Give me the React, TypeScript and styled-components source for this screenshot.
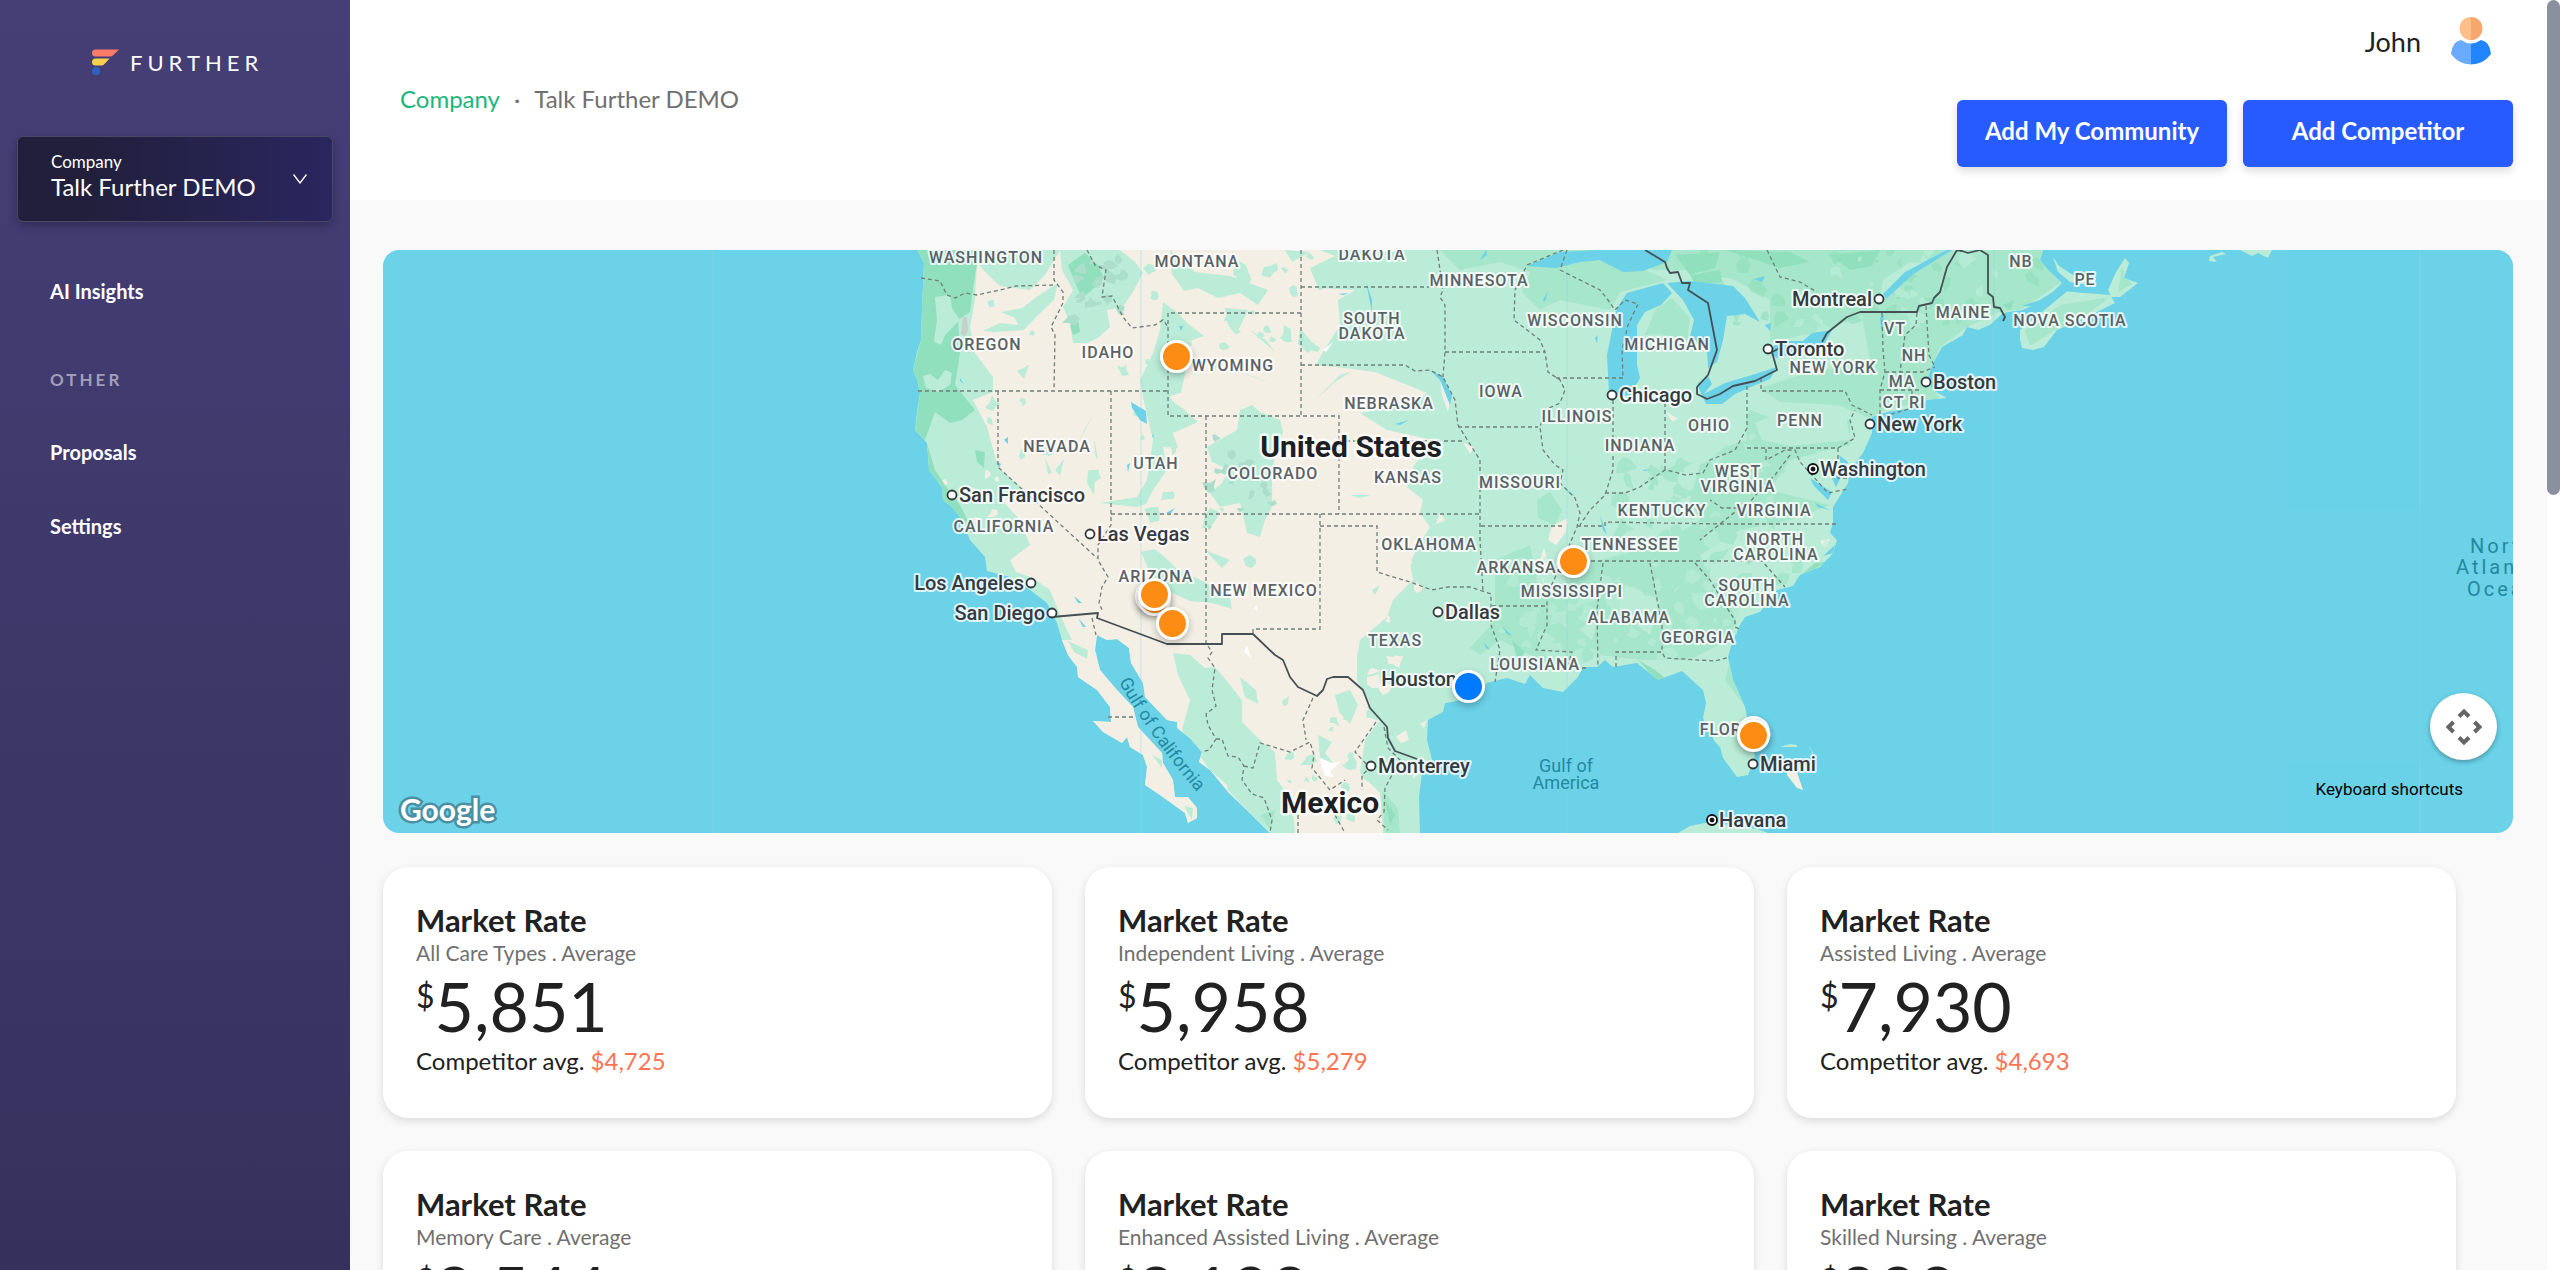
import React from "react";
import styled, { createGlobalStyle } from "styled-components";

const GlobalStyle = createGlobalStyle`
  * { box-sizing: border-box; }
  body { margin: 0; font-family: Lato, "Liberation Sans", sans-serif; color: #212121; background: #ffffff; }
  button { font-family: inherit; border: 0; padding: 0; cursor: pointer; }
  a { color: inherit; text-decoration: none; }
  h2, p { margin: 0; }
`;

/* ---------- shell ---------- */

const Shell = styled.div`
  display: flex;
  height: 100vh;
  overflow: hidden;
`;

const Sidebar = styled.aside`
  flex: 0 0 350px;
  display: flex;
  flex-direction: column;
  color: #ffffff;
  background: linear-gradient(180deg, #453f76 0%, #36315c 100%);
`;

const Brand = styled.a`
  display: flex;
  align-items: center;
  gap: 11px;
  height: 136px;
  padding: 0 0 11px 92px;
`;

const Wordmark = styled.span`
  font-size: 22px;
  line-height: 28px;
  letter-spacing: 5px;
`;

const CompanySwitch = styled.button`
  display: flex;
  align-items: center;
  justify-content: space-between;
  height: 86px;
  margin: 0 17px;
  padding: 0 25px 0 33px;
  text-align: left;
  color: #ffffff;
  border: 1px solid #4a4763;
  border-radius: 6px;
  background: linear-gradient(90deg, #211f3b 20%, #2a265f 100%);
  box-shadow: 0 4px 8px rgba(20, 16, 50, 0.35);
`;

const SwitchText = styled.span`
  display: flex;
  flex-direction: column;
  padding-bottom: 6px;
  font-size: 24px;
  line-height: 29px;
`;

const SwitchLabel = styled.span`
  font-size: 17px;
  line-height: 21px;
`;

const Nav = styled.nav`
  display: flex;
  flex-direction: column;
  padding: 32px 50px 0;
`;

const NavLink = styled.a`
  padding: 25px 0;
  font-size: 20px;
  line-height: 24px;
  font-weight: 700;
`;

const NavHeading = styled.span`
  margin: 40px 0 23px;
  font-size: 17px;
  line-height: 24px;
  font-weight: 700;
  letter-spacing: 3px;
  color: #a19eb9;
`;

const Page = styled.div`
  flex: 1 1 0;
  min-width: 0;
  overflow: hidden;
  background: #f9f9f9;
`;

const ScrollTrack = styled.div`
  flex: 0 0 13px;
  background: #ffffff;
`;

const ScrollThumb = styled.div`
  height: 39%;
  border-radius: 7px;
  background: #8a909d;
`;

/* ---------- header ---------- */

const Header = styled.header`
  display: flex;
  justify-content: space-between;
  align-items: center;
  min-height: 200px;
  padding: 17px 34px 33px 50px;
  background: #ffffff;
`;

const Crumbs = styled.nav`
  display: flex;
  gap: 14px;
  padding-top: 12px;
  font-size: 24px;
  line-height: 29px;
  color: #707070;
`;

const CrumbLink = styled.a`
  color: #1cb67c;
`;

const HeaderSide = styled.div`
  display: flex;
  flex-direction: column;
  align-items: flex-end;
  gap: 35px;
`;

const User = styled.button`
  display: flex;
  align-items: center;
  gap: 30px;
  height: 48px;
  padding-right: 22px;
  font-size: 27px;
  color: #212121;
  background: none;
`;

const Actions = styled.div`
  display: flex;
  gap: 16px;
`;

const ActionButton = styled.button`
  width: 270px;
  height: 67px;
  padding-bottom: 6px;
  font-size: 24px;
  font-weight: 700;
  color: #ffffff;
  border-radius: 6px;
  background: #275bff;
  box-shadow: 0 4px 8px rgba(0, 0, 0, 0.14);
`;

const Content = styled.main`
  padding: 50px 34px 33px 33px;
`;

/* ---------- map ---------- */

const MapFrame = styled.section`
  position: relative;
  height: 583px;
  overflow: hidden;
  border-radius: 16px;
  background: #6bd2e8;
`;

const MapCanvas = styled.div`
  position: absolute;
  top: 0;
  left: 50%;
  width: 2130px;
  height: 583px;
  margin-left: -1065px;
  svg { display: block; }
`;

const Pin = styled.button<{ $x: number; $y: number; $tone: string }>`
  position: absolute;
  left: ${(p) => p.$x - 17}px;
  top: ${(p) => p.$y - 17}px;
  width: 33px;
  height: 33px;
  border: 3px solid #ffffff;
  border-radius: 50%;
  background: ${(p) => p.$tone};
  box-shadow: 0 3px 7px rgba(0, 0, 0, 0.25);
`;

const MapLogo = styled.a`
  position: absolute;
  left: 17px;
  bottom: 6px;
  font-size: 30px;
  line-height: 36px;
  font-weight: 700;
  color: #ffffff;
  paint-order: stroke fill;
  -webkit-text-stroke: 5px #4a8fa2;
`;

const CameraButton = styled.button`
  position: absolute;
  right: 16px;
  bottom: 73px;
  display: grid;
  place-items: center;
  width: 67px;
  height: 67px;
  border-radius: 50%;
  background: #ffffff;
  box-shadow: 0 2px 5px rgba(0, 0, 0, 0.3);
`;

const Shortcuts = styled.button`
  position: absolute;
  right: 50px;
  bottom: 34px;
  font-family: Roboto, "Liberation Sans", sans-serif;
  font-size: 17px;
  line-height: 20px;
  color: #000000;
  background: none;
`;

const C = {
  water: "#6bd2e8",
  pale: "#bbecd8",
  mid: "#a6e6cb",
  deep: "#90e0bd",
  dry: "#f4efe5",
};

const MAINLAND =
  "M917,250 924,263 922,307 921,340 917,352 913,370 917,380 920,393 917,412 915,430 927,443 929,470 942,487 943,500 952,507 960,517 970,540 985,557 987,571 1010,577 1030,590 1047,603 1057,623 1062,640 1068,655 1077,667 1078,677 1097,690 1110,707 1111,722 1093,721 1103,732 1122,743 1127,737 1130,747 1143,755 1147,767 1145,785 1160,795 1185,813 1188,823 1197,818 1197,808 1188,797 1175,797 1173,780 1163,763 1162,753 1150,740 1138,727 1133,707 1117,690 1100,670 1095,650 1097,635 1107,640 1117,639 1129,648 1131,663 1143,683 1145,697 1167,720 1177,722 1177,728 1190,738 1202,752 1199,762 1210,770 1227,785 1228,792 1257,820 1270,833 1420,833 1419,797 1422,773 1432,760 1427,740 1428,720 1443,712 1445,703 1453,702 1470,697 1487,683 1507,678 1525,684 1530,675 1543,688 1563,692 1578,677 1583,667 1597,667 1605,660 1613,667 1637,663 1658,680 1682,671 1703,690 1706,703 1703,718 1715,742 1720,747 1723,758 1737,777 1748,775 1755,757 1745,707 1733,680 1728,657 1732,643 1740,625 1745,617 1760,612 1777,590 1793,586 1800,575 1820,567 1833,553 1837,540 1830,533 1833,523 1833,507 1848,483 1850,470 1863,453 1872,433 1872,417 1887,412 1912,408 1927,400 1947,398 1933,390 1927,380 1933,363 1942,347 1963,335 1967,327 1978,330 1990,325 2003,313 2022,310 2040,303 2057,288 2062,283 2048,270 2040,260 2043,250Z";

const ISLANDS = [
  "M2020,340 2020,330 2048,307 2042,300 2057,290 2073,292 2110,295 2115,303 2087,317 2057,330 2044,347 2033,350 2022,348Z",
  "M2108,290 2116,272 2125,258 2129,263 2124,278 2138,283 2120,297 2111,297Z",
  "M2053,257 2059,266 2073,275 2096,278 2094,286 2070,282 2058,272Z",
  "M1678,833 1690,826 1710,822 1735,826 1757,829 1768,833Z",
  "M1780,747 1790,744 1797,745 1797,747Z",
  "M1806,744 1812,750 1811,760 1813,752Z",
  "M2210,256 2209,261 2217,262 2213,257 2226,254 2222,252Z",
  "M2240,250 2252,256 2258,253 2268,258 2272,250Z",
];

const DRY = [
  "M977,262 985,272 1000,286 1030,290 1045,275 1060,250 1320,250 1335,256 1310,268 1318,288 1355,290 1338,300 1340,325 1323,352 1316,365 1345,368 1375,372 1400,382 1427,393 1413,403 1360,413 1387,430 1433,440 1413,467 1407,487 1423,500 1420,513 1430,527 1420,543 1410,563 1413,580 1393,600 1387,617 1360,640 1357,657 1357,680 1370,703 1380,720 1365,740 1360,773 1380,793 1383,833 1270,833 1257,820 1228,792 1210,770 1199,762 1202,752 1190,738 1177,728 1177,722 1167,720 1145,697 1143,683 1131,663 1129,648 1117,639 1107,640 1097,635 1095,650 1100,670 1117,690 1133,707 1138,727 1150,740 1162,753 1163,763 1173,780 1175,797 1188,797 1197,808 1197,818 1188,823 1185,813 1160,795 1145,785 1147,767 1143,755 1130,747 1127,737 1122,743 1103,732 1093,721 1111,722 1110,707 1097,690 1078,677 1077,667 1068,655 1062,640 1072,640 1060,615 1050,590 1033,578 1016,572 1010,560 1030,545 1020,520 1002,500 1024,490 998,467 987,427 973,400 993,392 993,377 975,353 970,327 975,300Z",
  "M1430,527 1445,520 1440,512 1436,524Z",
  "M1440,380 1450,400 1448,412 1442,395Z",
  "M1463,442 1474,448 1470,454Z",
  "M1548,540 1552,526 1568,518 1566,532 1556,545Z",
  "M1540,560 1544,548 1550,570 1543,582Z",
  "M1396,737 1406,730 1409,740 1401,743Z",
  "M1420,724 1427,720 1424,728Z",
  "M1788,761 1797,772 1803,790 1797,788 1787,775Z",
  "M1820,541 1830,539 1825,549Z",
  "M1424,770 1412,779 1421,758Z",
  "M1665,411 1678,419 1672,421Z",
];

const PALE = [
  "M1060,250 1120,250 1135,262 1143,273 1134,290 1123,307 1107,310 1110,327 1098,338 1087,343 1073,343 1070,323 1063,307 1073,290 1062,270Z",
  "M1163,302 1178,313 1187,323 1204,336 1184,343 1188,360 1181,393 1167,397 1182,408 1198,422 1173,433 1178,448 1163,447 1167,470 1153,490 1146,504 1137,507 1100,503 1137,497 1147,480 1153,440 1143,397 1140,380 1153,353 1160,330Z",
  "M1207,447 1237,430 1240,410 1252,405 1260,412 1280,420 1283,432 1276,450 1272,473 1272,507 1265,520 1260,537 1247,533 1240,503 1220,507 1210,493 1222,483 1230,470 1212,462Z",
  "M1141,552 1155,549 1166,558 1178,570 1205,582 1230,598 1232,609 1212,603 1190,601 1166,590 1150,572Z",
  "M1173,653 1190,655 1205,668 1215,667 1226,680 1242,700 1242,722 1262,742 1275,752 1277,780 1292,800 1295,833 1268,833 1250,814 1228,790 1208,768 1196,750 1182,730 1190,700 1178,675Z",
  "M983,331 1000,323 1018,325 1015,318 1001,312 1022,308 1038,296 1058,283 1054,300 1036,317 1024,330 994,332Z",
  "M985,265 1003,274 1024,272 1005,282 990,276Z",
  "M1017,371 1029,365 1024,379Z",
  "M1170,250 1195,272 1230,276 1268,290 1258,305 1240,293 1218,298 1198,288 1184,291 1172,274Z",
  "M1225,308 1248,310 1236,335 1228,325Z",
  "M1250,330 1275,352 1266,340Z",
  "M1233,370 1262,380 1274,384 1252,376Z",
  "M1300,328 1315,346 1308,353 1298,344Z",
  "M1315,400 1340,375 1352,371 1335,382Z",
  "M1285,250 1310,252 1292,262Z",
  "M1335,695 1350,690 1358,705 1350,724 1339,712Z",
  "M1380,585 1375,595 1372,590Z",
  "M1205,550 1230,560 1222,568Z",
  "M1068,641 1088,650 1087,659 1074,652Z",
  "M1152,755 1162,760 1162,768Z",
  "M1184,806 1193,808 1192,820Z",
  "M1318,735 1332,742 1325,753 1335,765 1320,758Z",
  "M1350,495 1371,495 1360,498Z",
  "M1080,440 1092,417 1084,430Z",
  "M1045,458 1052,473 1048,474Z",
  "M1055,470 1064,459 1060,476Z",
  "M1088,470 1095,478 1094,495 1087,483Z",
  "M1094,437 1098,460 1095,455Z",
  "M1240,677 1256,690 1258,704 1245,697Z",
];

const MID = [
  "M1440,250 1530,250 1600,250 1650,272 1667,280 1620,292 1610,310 1560,300 1540,310 1522,292 1530,272 1500,262 1460,270Z",
  "M1650,270 1670,250 2043,250 2060,283 2022,309 2000,312 1967,327 1940,347 1927,380 1940,398 1885,410 1870,418 1838,405 1780,402 1760,388 1800,375 1870,360 1862,316 1828,330 1770,342 1770,300 1735,280 1690,270Z",
  "M1655,310 1672,298 1690,318 1687,340 1660,334 1645,335Z",
  "M1700,465 1735,440 1750,410 1790,425 1850,420 1850,445 1790,460 1770,490 1830,505 1790,520 1740,530 1700,555 1720,600 1740,610 1728,640 1690,660 1640,660 1600,655 1570,670 1540,660 1520,650 1500,640 1480,655 1470,648 1495,620 1495,560 1530,545 1540,595 1560,560 1600,560 1660,545 1700,520 1690,500Z",
  "M1537,500 1550,492 1562,510 1555,525 1538,518Z",
  "M2025,330 2060,305 2110,297 2085,316 2055,330 2030,346Z",
  "M2118,292 2122,266 2126,277 2132,284Z",
  "M1730,660 1745,705 1740,700 1725,680Z",
  "M1260,815 1275,810 1270,830Z",
  "M1382,790 1398,808 1400,833 1385,833Z",
];

const DEEP = [
  "M917,250 980,250 975,275 970,312 958,320 960,353 955,385 975,410 962,420 950,423 935,412 925,440 915,430 920,393 913,370 921,340 922,307 924,263Z",
  "M1068,265 1085,253 1098,265 1104,278 1090,292 1082,297 1076,285Z",
  "M1070,325 1078,320 1080,332 1073,335Z",
  "M975,450 985,452 984,468 977,462Z",
  "M927,443 935,470 945,485 960,505 975,535 965,530 943,500 929,470Z",
  "M1675,255 1720,252 1715,268 1690,275Z",
  "M1725,250 1790,252 1810,262 1780,268 1750,258Z",
  "M1830,255 1880,250 1872,266 1850,270Z",
  "M1690,275 1720,270 1722,282 1696,286Z",
  "M1638,660 1655,670 1665,678 1682,671 1660,684Z",
  "M1795,580 1815,563 1826,562 1810,572Z",
  "M1512,640 1525,652 1518,662Z",
  "M2002,305 2015,300 2010,310Z",
  "M1385,800 1395,815 1390,825Z",
];

const OPEN = [
  "M935,297 950,295 952,308 960,320 945,335 941,345 934,342 937,320Z",
  "M923,376 930,374 938,380 945,370 952,373 950,385 938,392 926,388Z",
  "M1700,420 1745,395 1747,440 1700,455Z",
  "M1755,423 1800,405 1845,410 1850,440 1790,446 1762,440Z",
  "M1883,280 1910,262 1925,263 1895,290 1880,300Z",
  "M1725,330 1770,300 1768,345 1735,375 1722,372Z",
  "M1540,575 1560,562 1570,580 1552,590Z",
  "M1580,630 1600,612 1592,640Z",
  "M1625,585 1660,600 1650,635 1618,612Z",
  "M1740,570 1775,560 1790,583 1765,592Z",
];

const LAKES = [
  "M1617,308 1627,293 1663,283 1672,293 1661,305 1645,312 1637,325 1637,365 1640,378 1630,396 1609,393 1607,355 1613,325Z",
  "M1667,283 1690,281 1733,286 1745,298 1760,322 1745,314 1727,316 1723,340 1717,362 1708,368 1707,350 1690,337 1694,320 1683,300Z",
  "M1527,266 1560,252 1600,250 1672,250 1667,262 1643,271 1623,272 1600,260 1580,262 1556,268Z",
  "M1697,384 1708,376 1712,384 1704,394 1725,383 1752,375 1777,367 1770,379 1753,386 1735,394 1722,404 1706,404Z",
  "M1767,352 1780,341 1803,341 1812,333 1832,330 1823,346 1800,352 1777,358Z",
  "M1883,294 1905,272 1947,250 1952,250 1912,275 1886,299Z",
  "M1131,402 1146,411 1147,424 1140,420 1132,408Z",
  "M1004,440 1008,437 1008,444Z",
  "M996,461 1001,464 999,468Z",
  "M1179,326 1183,326 1181,331Z",
  "M1366,282 1372,300 1372,312Z",
  "M1338,294 1348,293 1344,295Z",
  "M1395,424 1409,420 1400,425Z",
  "M1430,370 1443,377 1452,395 1450,405 1440,380Z",
  "M1480,260 1486,250 1487,255Z",
  "M1543,300 1548,291 1545,302Z",
  "M1595,338 1598,335 1597,343Z",
  "M1484,642 1490,650 1486,648Z",
  "M1502,626 1512,636 1507,634Z",
  "M1561,485 1575,496 1570,494Z",
  "M1642,470 1651,469 1645,471Z",
  "M1600,515 1607,535 1603,530Z",
  "M1754,279 1765,276 1762,282Z",
  "M1765,325 1771,323 1770,331Z",
  "M1880,318 1884,315 1882,335Z",
  "M1074,596 1082,603 1078,603Z",
  "M1078,618 1086,627 1083,627Z",
  "M1166,513 1175,508 1171,513Z",
  "M1127,465 1130,463 1128,472Z",
  "M1152,436 1153,434 1154,438Z",
  "M960,378 964,384 960,381Z",
  "M1839,455 1848,462 1836,487 1832,478 1842,470Z",
  "M1810,478 1832,492 1828,500 1814,486Z",
  "M1815,503 1830,510 1818,507Z",
  "M2022,306 2040,300 2056,290 2070,289 2048,307Z",
  "M1823,556 1835,545 1833,553Z",
];

const STATE_LINES =
  "M921,278L940,281 947,295 955,298 965,293 977,295 1000,290 1016,286 1053,285 M1054,250V280L1063,292V303L1051,327 1055,335 1054,391 M918,391H1168 M1087,250L1095,265 1106,270 1102,297 1112,296 1123,317 1132,328 1155,325 1163,320 1168,327 M1301,313H1168V416H1339V514 M1301,250V416 M998,391V467L1075,538 1097,558 M1111,391V525L1098,545V560L1108,577 1102,587 1099,603 1103,612 M1111,514H1479 M1206,416V644 M1301,365H1405L1415,371 1430,370 1443,377 1455,400 1458,425 1468,441 1480,460V540L1483,592 M1301,287H1440 M1437,250L1443,290 1440,297 1445,305V352L1443,377 M1445,352H1545 M1563,250L1527,265 1515,290 1514,320 1540,340 1545,352 1548,372 1560,380 1565,390 1560,403 1545,410 1540,427 1543,450 1555,465 1563,470 1560,483 1575,498 1580,513 1577,527 1563,560 1547,595V625L1536,650 1572,652 1568,665 M1458,427H1538 M1339,441H1465 M1556,378H1623 M1613,400V470L1605,495 1590,510 1580,525 M1665,403V470 M1605,493H1625L1640,487 1650,480 1665,470 1675,472 1685,475 1703,473 1710,460 1735,450 1747,428V383 M1481,526H1563 M1577,526H1605V522L1720,524H1836 M1591,561H1762L1785,587 M1320,526H1377V572L1410,582 1432,590 1448,587 1470,587 1491,594V625L1500,650 1495,682 M1320,514V629H1253V634 M1492,606H1545 M1603,563L1597,610 1598,667 M1650,563L1662,625V652 M1586,668H1570 M1616,667V652H1662L1665,658 1715,661 1730,657 M1560,270L1600,290 1608,300 1615,310 1625,300 1638,304 1628,325 1622,350 1623,378 M1567,250L1560,270 M1761,378V391H1845L1852,405 1872,415 M1747,448H1838L1855,438 1850,420 1855,410 M1838,448V478H1850 M1882,313L1883,350 1885,372 1880,390V415 M1885,372H1922L1935,367 M1917,313L1916,325 1905,335 1900,372 M1926,306L1929,355 1935,367 M1880,390H1920 M1912,391V408L1885,416 M1766,449V460L1785,450 1795,450 1800,462 1812,475 1828,493 1848,489 M1790,455L1775,475 1760,490 1745,508 1722,508 1710,500 M1695,563L1710,580 1725,605 1735,620 1735,627 1740,629 M1740,508L1700,540 M1767,250L1780,277 1800,282 1817,292 M1208,646L1212,652 1208,658 1215,668 1212,690 1216,706 1206,714 1208,725 1216,739 1209,750 1202,752 M1216,739H1222L1228,756 1238,757 1244,766 1242,780 1252,794 1264,798 1272,820 1270,833 M1244,766L1253,768 1260,743 1290,752 1310,742 1314,755 1312,768 1330,790 1345,780 M1313,698L1303,720 1306,740 M1376,722L1355,752 1370,768 1362,775 1362,790 M1384,727L1388,748 1400,760 1385,788 1384,812 1377,820 1388,830 M1108,717H1135 M1092,618L1096,635 M1335,815L1345,833 M1298,833V815";

const NATION_LINES =
  "M1645,250L1665,262 1667,268 1670,273 1678,272 1682,283 1690,283 1688,290 1708,303 1717,350 1708,375 1697,387V394L1707,399 1720,394 1733,386 1755,381 1777,370 1772,352 1780,348 M1822,342L1827,333 1847,317 1860,312H1917L1919,306 1932,303 1934,298 1940,292 1947,267 1957,250 1962,251 1968,253 1980,250 1988,255V293L1993,297 1994,307 2000,308 2005,317 2003,321 M1052,617L1098,613 1097,618 1167,644H1222V634H1253L1275,655 1283,660 1290,677 1298,687 1317,696 1323,690 1327,679 1333,677H1348L1363,690 1370,708 1387,727 1388,738 1395,751 1417,759";

type Label = [string, number, number];

const STATES: Label[] = [
  ["WASHINGTON", 986, 263], ["MONTANA", 1197, 267], ["OREGON", 987, 350], ["IDAHO", 1108, 358],
  ["WYOMING", 1233, 371], ["NEVADA", 1057, 452], ["UTAH", 1156, 469], ["COLORADO", 1273, 479],
  ["CALIFORNIA", 1004, 532], ["DAKOTA", 1372, 260], ["MINNESOTA", 1479, 286], ["SOUTH", 1372, 324],
  ["DAKOTA", 1372, 339], ["WISCONSIN", 1575, 326], ["MICHIGAN", 1667, 350], ["IOWA", 1501, 397],
  ["NEBRASKA", 1389, 409], ["ILLINOIS", 1577, 422], ["INDIANA", 1640, 451], ["OHIO", 1709, 431],
  ["KANSAS", 1408, 483], ["MISSOURI", 1520, 488], ["KENTUCKY", 1662, 516], ["OKLAHOMA", 1429, 550],
  ["TENNESSEE", 1630, 550], ["ARKANSAS", 1522, 573], ["MISSISSIPPI", 1572, 597], ["ALABAMA", 1629, 623],
  ["GEORGIA", 1698, 643], ["TEXAS", 1395, 646], ["LOUISIANA", 1535, 670], ["FLORIDA", 1735, 735],
  ["NEW MEXICO", 1264, 596], ["ARIZONA", 1156, 582], ["NB", 2021, 267], ["PE", 2085, 285],
  ["MAINE", 1963, 318], ["NOVA SCOTIA", 2070, 326], ["VT", 1895, 334], ["NH", 1914, 361],
  ["MA", 1902, 387], ["CT RI", 1904, 408], ["NEW YORK", 1833, 373], ["PENN", 1800, 426],
  ["WEST", 1738, 477], ["VIRGINIA", 1738, 492], ["VIRGINIA", 1774, 516], ["NORTH", 1775, 545],
  ["CAROLINA", 1776, 560], ["SOUTH", 1747, 591], ["CAROLINA", 1747, 606],
];

type City = { name: string; x: number; y: number; side?: "left"; capital?: boolean };

const CITIES: City[] = [
  { name: "San Francisco", x: 952, y: 495 },
  { name: "Las Vegas", x: 1090, y: 534 },
  { name: "Los Angeles", x: 1031, y: 583, side: "left" },
  { name: "San Diego", x: 1052, y: 613, side: "left" },
  { name: "Chicago", x: 1612, y: 395 },
  { name: "Montreal", x: 1879, y: 299, side: "left" },
  { name: "Toronto", x: 1768, y: 349 },
  { name: "Boston", x: 1926, y: 382 },
  { name: "New York", x: 1870, y: 424 },
  { name: "Washington", x: 1813, y: 469, capital: true },
  { name: "Dallas", x: 1438, y: 612 },
  { name: "Houston", x: 1464, y: 679, side: "left" },
  { name: "Monterrey", x: 1371, y: 766 },
  { name: "Miami", x: 1753, y: 764 },
  { name: "Havana", x: 1712, y: 820, capital: true },
];

const ORANGE = "#fc8c14";
const PINS = [
  { place: "Wyoming", x: 794, y: 107, tone: ORANGE },
  { place: "Phoenix west", x: 769, y: 347, tone: ORANGE },
  { place: "Phoenix south", x: 772, y: 350, tone: ORANGE },
  { place: "Phoenix", x: 772, y: 345, tone: ORANGE },
  { place: "Tucson", x: 790, y: 374, tone: ORANGE },
  { place: "Memphis", x: 1191, y: 312, tone: ORANGE },
  { place: "Florida north", x: 1371, y: 483, tone: ORANGE },
  { place: "Florida", x: 1371, y: 486, tone: ORANGE },
  { place: "Houston", x: 1086, y: 437, tone: "#007bff" },
];

/* Small irregular patches that give the terrain its mottled texture. */
function patches(seed: number, count: number, box: number[], size: number) {
  let s = seed;
  const next = () => {
    s = (s * 16807) % 2147483647;
    return s / 2147483647;
  };
  const out: string[] = [];
  for (let i = 0; i < count; i++) {
    const cx = box[0] + next() * (box[2] - box[0]);
    const cy = box[1] + next() * (box[3] - box[1]);
    const pts: string[] = [];
    const r = size * (0.4 + next());
    for (let k = 0; k < 7; k++) {
      const a = (k / 7) * Math.PI * 2;
      const d = r * (0.3 + next());
      pts.push(`${Math.round(cx + Math.cos(a) * d)},${Math.round(cy + Math.sin(a) * d)}`);
    }
    out.push(`M${pts.join(" ")}Z`);
  }
  return out.join(" ");
}

const Terrain = () => (
  <g>
    <path d={MAINLAND} fill={C.pale} />
    {ISLANDS.map((d) => <path key={d} d={d} fill={C.pale} />)}
    {DRY.map((d) => <path key={d} d={d} fill={C.dry} />)}
    <g clipPath="url(#land)">
      {PALE.map((d) => <path key={d} d={d} fill={C.pale} />)}
      <path d={patches(11, 30, [990, 300, 1300, 570], 6)} fill={C.pale} />
      <path d={patches(47, 16, [1150, 255, 1300, 345], 7)} fill={C.pale} />
      <path d={patches(23, 16, [1310, 255, 1420, 360], 6)} fill={C.pale} />
      <path d={patches(31, 24, [1285, 690, 1385, 833], 6)} fill={C.pale} />
      <path d={patches(71, 14, [1360, 540, 1420, 700], 6)} fill={C.dry} />
      <path d={patches(5, 12, [935, 440, 1010, 540], 5)} fill={C.dry} />
      {MID.map((d) => <path key={d} d={d} fill={C.mid} />)}
      {DEEP.map((d) => <path key={d} d={d} fill={C.deep} />)}
      {OPEN.map((d) => <path key={d} d={d} fill={C.pale} />)}
      <path d={patches(91, 60, [1500, 560, 1740, 665], 8)} fill={C.pale} opacity={0.6} />
      <path d={patches(17, 50, [1700, 410, 1860, 600], 8)} fill={C.pale} opacity={0.6} />
      <path d={patches(63, 50, [1620, 460, 1800, 600], 8)} fill={C.mid} />
      <path d={patches(29, 40, [1700, 250, 2040, 330], 7)} fill={C.deep} opacity={0.6} />
      <path d={patches(83, 24, [1800, 250, 2000, 330], 6)} fill={C.pale} opacity={0.7} />
      <path d={patches(37, 18, [1070, 250, 1130, 330], 6)} fill="#abdfcb" />
      <path d={patches(53, 14, [1210, 430, 1275, 530], 6)} fill="#abdfcb" />
      <path d="M963,316 967,318 968,330 965,337 961,334Z" fill="#c8cfcb" />
      <path d="M1244,652 1247,645 1251,658Z M1254,608 1257,605 1258,611Z M1320,758 1332,763 1340,762 1330,772 1334,777 1325,776 1322,768Z M1323,350 1333,342 1326,352Z" fill="#ffffff" />
    </g>
    {LAKES.map((d) => <path key={d} d={d} fill={C.water} />)}
  </g>
);

const MapArt = () => (
  <svg width="2130" height="583" viewBox="383 250 2130 583" role="img" aria-label="Map of the United States">
    <defs>
      <clipPath id="land">
        <path d={MAINLAND} />
        {ISLANDS.map((d) => <path key={d} d={d} />)}
      </clipPath>
    </defs>
    <Terrain />
    <path d="M713,250V833 M1141,250V833 M1567,250V833 M1994,250V833 M2420,250V833" stroke="#8fd6e2" strokeWidth="1" opacity="0.45" />
    <path d={STATE_LINES} fill="none" stroke="#6f7f7a" strokeWidth="1.3" strokeDasharray="4 3" />
    <path d={NATION_LINES} fill="none" stroke="#455054" strokeWidth="1.8" strokeLinejoin="round" />
    <g fontFamily='Roboto, "Liberation Sans", sans-serif' stroke="#ffffff" strokeOpacity="0.8" paintOrder="stroke" strokeLinejoin="round">
      <g fontSize="16" fontWeight="500" letterSpacing="1" fill="#5b6266" textAnchor="middle" strokeWidth="4">
        {STATES.map(([name, x, y]) => <text key={`${name}${x}${y}`} x={x} y={y}>{name}</text>)}
      </g>
      <g fontSize="20" fontWeight="500" fill="#363a3f" strokeWidth="4">
        {CITIES.map((c) => (
          <text key={c.name} x={c.side ? c.x - 7 : c.x + 7} y={c.y + 7} textAnchor={c.side ? "end" : "start"}>{c.name}</text>
        ))}
      </g>
      <g fontSize="30" fontWeight="700" fill="#1d2023" textAnchor="middle" strokeWidth="5">
        <text x="1351" y="457">United States</text>
        <text x="1330" y="813">Mexico</text>
      </g>
    </g>
    {CITIES.filter((c) => c.name !== "Houston").map((c) => (
      <g key={c.name} fill="#ffffff" stroke={c.capital ? "#111111" : "#33383b"}>
        <circle cx={c.x} cy={c.y} r={c.capital ? 5 : 4.5} strokeWidth="1.8" />
        {c.capital && <circle cx={c.x} cy={c.y} r="2" fill="#111111" strokeWidth="1" />}
      </g>
    ))}
    <g fontFamily='Roboto, "Liberation Sans", sans-serif' fontSize="18" fill="#2489a0">
      <text x="1566" y="772" textAnchor="middle">Gulf of</text>
      <text x="1566" y="789" textAnchor="middle">America</text>
      <path id="gulf-line" d="M1119,682 Q1152,742 1216,814" fill="none" />
      <text><textPath href="#gulf-line">Gulf of California</textPath></text>
      <g fontSize="20" letterSpacing="3">
        <text x="2470" y="553">North</text>
        <text x="2456" y="574">Atlantic</text>
        <text x="2467" y="596">Ocean</text>
      </g>
    </g>
  </svg>
);

const MarketMap = () => (
  <MapFrame aria-label="Communities map">
    <MapCanvas>
      <MapArt />
      {PINS.map((p) => (
        <Pin key={p.place} aria-label={p.place} $x={p.x} $y={p.y} $tone={p.tone} />
      ))}
    </MapCanvas>
    <MapLogo href="#google">Google</MapLogo>
    <CameraButton aria-label="Map camera controls">
      <svg width="40" height="40" viewBox="0 0 40 40" fill="none" stroke="#666666" strokeWidth="4">
        <path d="M15 9.500l5-5 5 5M15 30.500l5 5 5-5M9.500 15l-5 5 5 5M30.500 15l5 5-5 5" />
      </svg>
    </CameraButton>
    <Shortcuts>Keyboard shortcuts</Shortcuts>
  </MapFrame>
);

/* ---------- rate cards ---------- */

const CardGrid = styled.section`
  display: grid;
  grid-template-columns: repeat(3, 1fr);
  gap: 33px;
  margin-top: 34px;
  padding-right: 57px;
`;

const Card = styled.article`
  min-height: 251px;
  padding: 33px 34px 43px 33px;
  border-radius: 25px;
  background: #ffffff;
  box-shadow: 0 3px 8px rgba(0, 0, 0, 0.12);
`;

const CardTitle = styled.h2`
  font-size: 31px;
  line-height: 40px;
  font-weight: 700;
`;

const CardScope = styled.p`
  font-size: 21px;
  line-height: 26px;
  color: #707070;
`;

const Price = styled.p`
  display: flex;
  align-items: flex-start;
  font-size: 68px;
  line-height: 80px;
`;

const Currency = styled.span`
  font-size: 32px;
  line-height: 60px;
`;

const Competitor = styled.p`
  font-size: 24px;
  line-height: 29px;
`;

const CompetitorRate = styled.span`
  color: #ff7352;
`;

const RATES = [
  { scope: "All Care Types", price: "5,851", rival: "$4,725" },
  { scope: "Independent Living", price: "5,958", rival: "$5,279" },
  { scope: "Assisted Living", price: "7,930", rival: "$4,693" },
  { scope: "Memory Care", price: "8,544", rival: "$5,865" },
  { scope: "Enhanced Assisted Living", price: "8,198", rival: "$5,120" },
  { scope: "Skilled Nursing", price: "888", rival: "$790" },
];

const RateCard = ({ scope, price, rival }: { scope: string; price: string; rival: string }) => (
  <Card>
    <CardTitle>Market Rate</CardTitle>
    <CardScope>{scope} . Average</CardScope>
    <Price><Currency>$</Currency>{price}</Price>
    <Competitor>Competitor avg. <CompetitorRate>{rival}</CompetitorRate></Competitor>
  </Card>
);

/* ---------- page ---------- */

const Logo = () => (
  <svg width="27" height="27" viewBox="0 0 27 26" aria-hidden="true">
    <path d="M3.500 0H27l-5.500 5.500Q20 7 18 7H3.500a3.500 3.500 0 0 1 0-7Z" fill="#fb7b68" />
    <path d="M3.500 9H17.500l-4.500 5Q11.500 16 9.500 16H3.500a3.500 3.500 0 0 1 0-7Z" fill="#f6cf4e" />
    <circle cx="4" cy="21.500" r="4" fill="#2a62bd" />
  </svg>
);

const Avatar = () => (
  <svg width="40" height="48" viewBox="0 0 40 48" aria-hidden="true">
    <path d="M20 0a11.500 11.500 0 0 0 0 23Z" fill="#ffbe8a" />
    <path d="M20 0a11.500 11.500 0 0 1 0 23Z" fill="#f5a76c" />
    <path d="M10 23q5 3.500 10 3.500V47.500Q8 47.500 0 37 1 24.500 10 23Z" fill="#6aabff" />
    <path d="M30 23q-5 3.500-10 3.500V47.500Q32 47.500 40 37 39 24.500 30 23Z" fill="#2185ff" />
  </svg>
);

export default function App() {
  return (
    <>
      <GlobalStyle />
      <Shell>
        <Sidebar>
          <Brand href="#home">
            <Logo />
            <Wordmark>FURTHER</Wordmark>
          </Brand>
          <CompanySwitch>
            <SwitchText>
              <SwitchLabel>Company</SwitchLabel>
              Talk Further DEMO
            </SwitchText>
            <svg width="14" height="10" viewBox="0 0 14 10" fill="none" stroke="#ffffff" strokeWidth="1.3" aria-hidden="true">
              <path d="M.5.5 7 9 13.500.5" />
            </svg>
          </CompanySwitch>
          <Nav aria-label="Main">
            <NavLink href="#insights">AI Insights</NavLink>
            <NavHeading>OTHER</NavHeading>
            <NavLink href="#proposals">Proposals</NavLink>
            <NavLink href="#settings">Settings</NavLink>
          </Nav>
        </Sidebar>
        <Page>
          <Header>
            <Crumbs aria-label="Breadcrumb">
              <CrumbLink href="#company">Company</CrumbLink>
              <span>·</span>
              <span>Talk Further DEMO</span>
            </Crumbs>
            <HeaderSide>
              <User>
                John
                <Avatar />
              </User>
              <Actions>
                <ActionButton>Add My Community</ActionButton>
                <ActionButton>Add Competitor</ActionButton>
              </Actions>
            </HeaderSide>
          </Header>
          <Content>
            <MarketMap />
            <CardGrid>
              {RATES.map((r) => <RateCard key={r.scope} {...r} />)}
            </CardGrid>
          </Content>
        </Page>
        <ScrollTrack>
          <ScrollThumb />
        </ScrollTrack>
      </Shell>
    </>
  );
}
